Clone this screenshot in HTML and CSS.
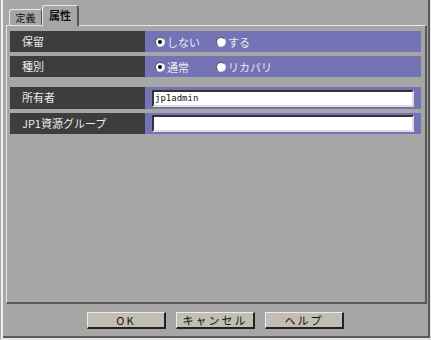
FILE: index.html
```html
<!DOCTYPE html>
<html lang="ja">
<head>
    <meta charset="UTF-8">
    <title>属性</title>
    <link rel="stylesheet" href="styles.css">
</head>
<body>
    <div class="window">
        <div class="tabs">
            <div class="tab">定義</div>
            <div class="tab active">属性</div>
        </div>

        <div class="panel">
            <div class="group">
                <div class="row">
                    <div class="label">保留</div>
                    <div class="value">
                        <span class="option"><span class="radio checked"></span>しない</span>
                        <span class="option"><span class="radio"></span>する</span>
                    </div>
                </div>
                <div class="row">
                    <div class="label">種別</div>
                    <div class="value">
                        <span class="option"><span class="radio checked"></span>通常</span>
                        <span class="option"><span class="radio"></span>リカバリ</span>
                    </div>
                </div>
            </div>

            <div class="group">
                <div class="row tall">
                    <div class="label">所有者</div>
                    <div class="value">
                        <div class="field">jp1admin</div>
                    </div>
                </div>
                <div class="row">
                    <div class="label">JP1資源グループ</div>
                    <div class="value">
                        <div class="field"></div>
                    </div>
                </div>
            </div>
        </div>

        <div class="buttons">
            <button class="btn">OK</button>
            <button class="btn">キャンセル</button>
            <button class="btn">ヘルプ</button>
        </div>
    </div>
</body>
</html>
```

FILE: styles.css
```css
body {
    margin: 0;
    background: #a6a6a6;
    font-family: "Noto Sans CJK JP", "DejaVu Sans", sans-serif;
    font-size: 11px;
}

.window {
    width: 431px;
    height: 340px;
    box-sizing: border-box;
    border-left: 1px solid #a6a6a6;
    border-right: 1px solid #e6e6e6;
    border-bottom: 2px solid #e6e6e6;
    box-shadow: inset 2px 0 0 #f0f0f0, inset -2px -2px 0 #5a5a5a;
    display: flex;
    flex-direction: column;
}

/* Tabs */
.tabs {
    display: flex;
    align-items: flex-end;
    height: 25px;
    padding-left: 8px;
}

.tab {
    height: 16px;
    width: 33px;
    box-sizing: border-box;
    border-top: 1px solid #e8e8e8;
    border-left: 1px solid #e8e8e8;
    border-right: 1px solid #555;
    border-radius: 3px 3px 0 0;
    color: #111;
    text-align: center;
    line-height: 16px;
    font-size: 10px;
}

.tab.active {
    height: 21px;
    width: 37px;
    line-height: 18px;
    font-weight: bold;
    font-size: 11px;
    border-right: 2px solid #555;
    position: relative;
    z-index: 1;
    margin-bottom: -1px;
    background: #a6a6a6;
}

/* Panel */
.panel {
    margin: 0 3px 0 5px;
    height: 279px;
    box-sizing: border-box;
    border-top: 1px solid #e8e8e8;
    border-left: 1px solid #e8e8e8;
    border-right: 2px solid #5a5a5a;
    border-bottom: 2px solid #5a5a5a;
    padding: 5px 3px 0 3px;
    display: flex;
    flex-direction: column;
    gap: 10px;
}

.group {
    display: flex;
    flex-direction: column;
    gap: 4px;
}

.row {
    display: grid;
    grid-template-columns: 135px 276px;
    height: 21px;
}

.row.tall {
    height: 22px;
}

.label {
    background: #3d3d3d;
    color: #ececec;
    padding-left: 12px;
    line-height: 20px;
}

.value {
    background: #7373b5;
    display: flex;
    align-items: center;
    padding-left: 10px;
    color: #ececec;
}

.option {
    display: flex;
    align-items: center;
    width: 61px;
    white-space: nowrap;
}

.radio {
    width: 10px;
    height: 10px;
    box-sizing: border-box;
    border-radius: 50%;
    background: #fff;
    border: 1px solid #555;
    border-right-color: #ddd;
    border-bottom-color: #ddd;
    margin-right: 2px;
    display: flex;
    align-items: center;
    justify-content: center;
}

.radio.checked::after {
    content: '';
    width: 4px;
    height: 4px;
    border-radius: 50%;
    background: #000;
}

.field {
    width: 262px;
    height: 17px;
    margin-left: -3px;
    box-sizing: border-box;
    background: #fff;
    border-top: 2px solid #333;
    border-left: 2px solid #333;
    border-right: 2px solid #ddd;
    border-bottom: 2px solid #ddd;
    color: #111;
    font-family: "DejaVu Sans Mono", monospace;
    font-size: 9px;
    line-height: 13px;
    padding-left: 1px;
}

/* Buttons */
.buttons {
    display: flex;
    justify-content: center;
    gap: 10px;
    padding-top: 8px;
}

.btn {
    width: 79px;
    height: 17px;
    padding: 0;
    background: #c2beb3;
    border-top: 1px solid #eeece6;
    border-left: 1px solid #eeece6;
    border-right: 2px solid #222;
    border-bottom: 2px solid #222;
    color: #111;
    font-family: "Noto Sans CJK JP", "DejaVu Sans", sans-serif;
    font-size: 11px;
    line-height: 13px;
    letter-spacing: 2px;
}
```
